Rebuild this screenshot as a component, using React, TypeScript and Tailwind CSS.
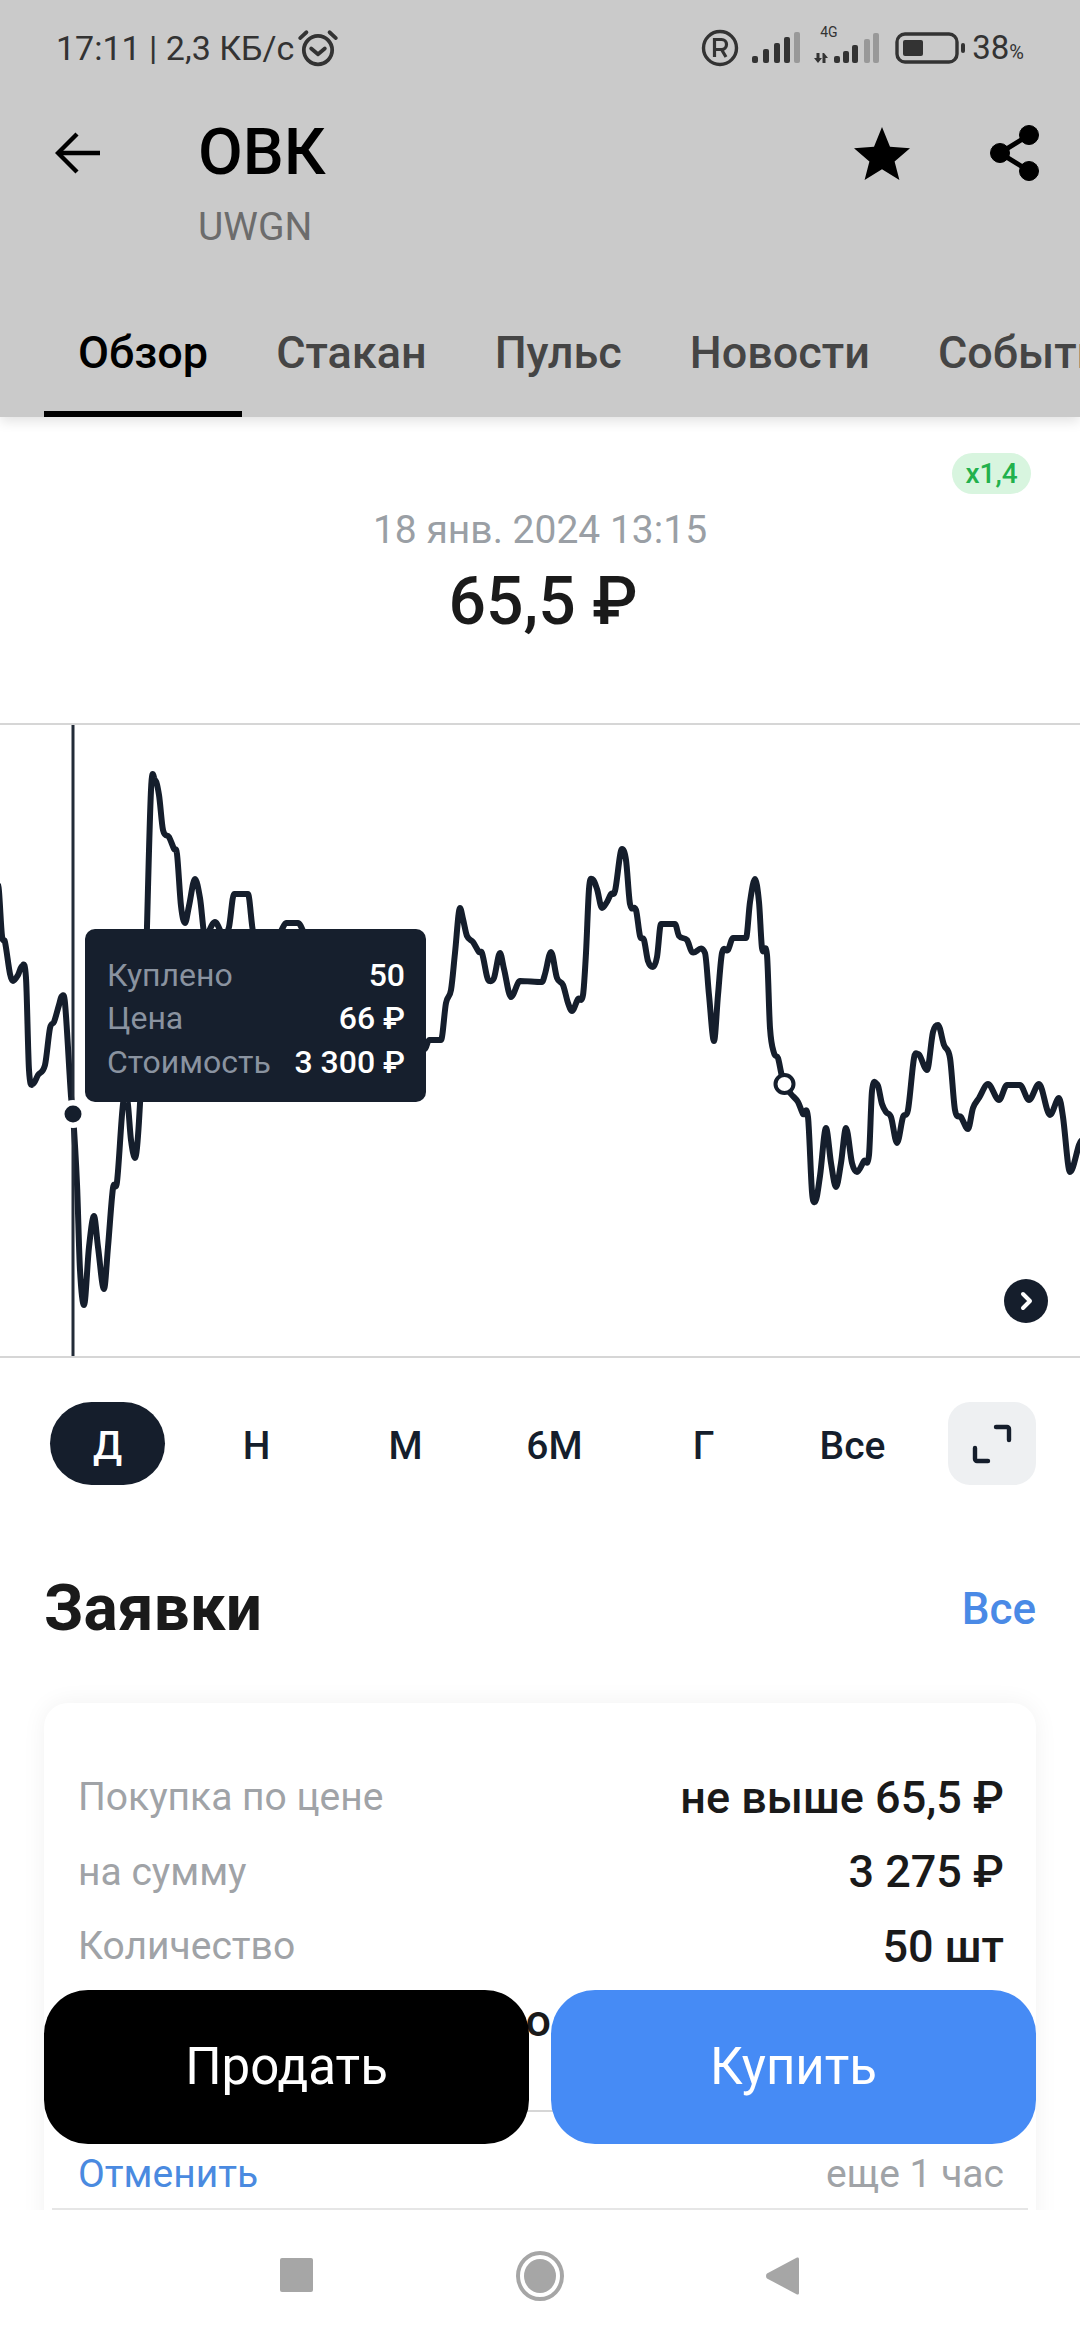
import { useMemo } from "react";

const tabs = ["Обзор", "Стакан", "Пульс", "Новости", "События"];
const ranges = ["Д", "Н", "М", "6М", "Г", "Все"];

// chart points in page pixels
const chartPoints: [number, number][] = [
  [-2, 885], [2, 936], [5, 942], [10, 974], [13, 981], [18, 975], [22, 966], [26, 978], [29, 1070], [33, 1084], [38, 1075], [45, 1065],
  [50, 1028], [54, 1022], [59, 1005], [62, 996], [65, 1003], [71, 1096], [73, 1114], [77, 1184], [80, 1270], [84, 1305], [89, 1247], [94, 1216],
  [98, 1247], [104, 1289], [108, 1247], [113, 1188], [117, 1182], [123, 1104], [127, 1100], [131, 1140], [135, 1158], [139, 1121], [145, 995],
  [151, 790], [155, 780], [159, 795], [163, 830], [169, 837], [174, 849], [177, 854], [181, 906], [185, 923], [189, 906], [195, 879], [200, 898],
  [205, 936], [215, 922], [224, 936], [229, 927], [234, 894], [248, 894], [253, 931], [265, 950], [281, 931], [286, 923], [298, 923], [303, 931],
  [330, 1000], [380, 1050], [425, 1049], [429, 1040], [441, 1040], [446, 1003], [451, 990], [455, 953], [460, 908], [463, 919], [467, 936],
  [473, 942], [479, 952], [482, 953], [489, 981], [494, 978], [500, 953], [504, 969], [511, 997], [520, 981], [542, 982], [545, 974], [551, 952],
  [557, 978], [563, 985], [568, 1003], [572, 1011], [578, 999], [583, 995], [586, 953], [589, 889], [592, 879], [597, 889], [602, 908], [607, 902],
  [611, 894], [615, 891], [622, 849], [626, 860], [630, 904], [636, 910], [640, 936], [644, 940], [648, 961], [653, 967], [657, 957], [661, 924],
  [675, 924], [679, 936], [687, 940], [692, 952], [705, 953], [709, 995], [714, 1041], [718, 995], [722, 953], [728, 950], [733, 938], [746, 938],
  [750, 902], [755, 879], [759, 902], [762, 948], [767, 955], [770, 1028], [774, 1053], [778, 1058], [781, 1072], [784, 1084], [791, 1094],
  [798, 1102], [803, 1114], [808, 1117], [812, 1192], [815, 1202], [820, 1176], [826, 1128], [831, 1163], [836, 1187], [841, 1163], [846, 1128],
  [852, 1163], [857, 1172], [864, 1161], [869, 1155], [872, 1091], [877, 1084], [882, 1104], [886, 1112], [891, 1117], [897, 1143], [903, 1117],
  [908, 1110], [914, 1058], [918, 1054], [927, 1070], [933, 1032], [938, 1025], [944, 1045], [950, 1058], [955, 1110], [961, 1117], [968, 1129],
  [973, 1108], [979, 1098], [988, 1084], [999, 1100], [1007, 1085], [1020, 1085], [1029, 1100], [1039, 1084], [1050, 1115], [1059, 1098],
  [1063, 1117], [1070, 1172], [1082, 1140],
];

// flat tangent at every turning point, so peaks stay round and don't overshoot
function smoothPath(pts: [number, number][]) {
  const slope = (i: number) => {
    const a = pts[Math.max(i - 1, 0)];
    const b = pts[i];
    const c = pts[Math.min(i + 1, pts.length - 1)];
    if ((b[1] - a[1]) * (c[1] - b[1]) <= 0) return 0;
    return (c[1] - a[1]) / (c[0] - a[0]);
  };
  let d = `M${pts[0][0]} ${pts[0][1]}`;
  for (let i = 0; i < pts.length - 1; i++) {
    const p1 = pts[i];
    const p2 = pts[i + 1];
    const h = (p2[0] - p1[0]) / 3;
    d += ` C${p1[0] + h} ${p1[1] + slope(i) * h} ${p2[0] - h} ${p2[1] - slope(i + 1) * h} ${p2[0]} ${p2[1]}`;
  }
  return d;
}

function StatusBar() {
  return (
    <div className="flex h-[95px] items-center pl-[56px] pr-[56px] text-[#333]">
      <span className="text-[34px] leading-none">17:11 | 2,3 КБ/с</span>
      <svg className="ml-[3px] h-[38px] w-[42px]" viewBox="0 0 40 36" fill="none" stroke="#333" strokeWidth="3.6" strokeLinecap="round" strokeLinejoin="round">
        <circle cx="20" cy="20" r="13.5" />
        <path d="M13.5 18.5 20 24l6.500-5.500" />
        <path d="M3 8.500 9 3M37 8.500 31 3" />
      </svg>
      <div className="ml-auto flex items-center">
        <svg className="h-[38px] w-[38px]" viewBox="0 0 38 38" fill="none">
          <circle cx="19" cy="19" r="16.5" stroke="#333" strokeWidth="3.4" />
          <path d="M13.5 28V10.5h7a5 5 0 0 1 0 10h-7m7 0 4.5 7.5" stroke="#333" strokeWidth="3.2" />
        </svg>
        <svg className="ml-[13px] h-[32px] w-[49px]" viewBox="0 0 49 32" fill="#333">
          <rect x="0" y="24" width="6" height="7" rx="2" />
          <rect x="11" y="17" width="6" height="14" rx="2" />
          <rect x="22" y="11" width="6" height="20" rx="2" />
          <rect x="32" y="5" width="6" height="26" rx="2" />
          <rect x="42" y="0" width="6" height="31" rx="2" fill="#999" />
        </svg>
        <div className="relative ml-[13px] h-[32px] w-[66px]">
          <span className="absolute left-[6px] top-[-9px] text-[14px] leading-[18px]">4G</span>
          <svg className="absolute left-0 top-0 h-[32px] w-[66px]" viewBox="0 0 66 32" fill="#333">
            <path d="M2.500 21h3v5H8l-4 5-4-5h2.500ZM10 21l4 5h-2.500v5h-3v-10Z" />
            <rect x="20" y="24" width="6" height="7" rx="2" />
            <rect x="29" y="19" width="6" height="12" rx="2" />
            <rect x="38" y="13" width="6" height="18" rx="2" />
            <rect x="50" y="7" width="6" height="24" rx="2" fill="#999" />
            <rect x="59" y="1" width="6" height="30" rx="2" fill="#999" />
          </svg>
        </div>
        <svg className="ml-[15px] h-[32px] w-[70px]" viewBox="0 0 70 32" fill="none">
          <rect x="2" y="2" width="60" height="28" rx="8" stroke="#333" strokeWidth="3.4" />
          <rect x="8" y="8" width="20" height="16" rx="2" fill="#333" />
          <rect x="66" y="11" width="4" height="10" rx="2" fill="#333" />
        </svg>
        <span className="ml-[7px] text-[33px] leading-none">
          38<span className="text-[20px]">%</span>
        </span>
      </div>
    </div>
  );
}

function Header() {
  return (
    <header className="relative z-10 flex h-[417px] shrink-0 flex-col overflow-hidden bg-[#cacaca] shadow-[0_4px_12px_rgba(0,0,0,0.12)]">
      <StatusBar />
      <div className="mt-[21px] flex pl-[55px] pr-[41px]">
        <svg className="mt-[16px] h-[42px] w-[45px]" viewBox="0 0 45 42" fill="none" stroke="#000" strokeWidth="4.4">
          <path d="M45 21H3" />
          <path d="M22 2 3 21l19 19" />
        </svg>
        <div className="ml-[98px]">
          <div className="text-[65px] font-medium leading-[72px] text-black">ОВК</div>
          <div className="mt-[16px] text-[39px] leading-[46px] text-[#6c6c6c]">UWGN</div>
        </div>
        <svg className="ml-auto mt-[11px] h-[53px] w-[56px]" viewBox="0 0 56 53" fill="#000">
          <path d="M28 0l8 19.8 20 1.5-15.4 13.2L45.4 53 28 42.2 10.6 53l4.8-18.5L0 21.3l20-1.5Z" />
        </svg>
        <svg className="ml-[80px] mt-[9px] h-[56px] w-[49px]" viewBox="0 0 49 56" fill="#000" stroke="#000">
          <circle cx="39" cy="10" r="9.5" />
          <circle cx="39" cy="46" r="9.5" />
          <circle cx="10" cy="28" r="9.5" />
          <path d="M39 10 10 28l29 18" fill="none" strokeWidth="5" />
        </svg>
      </div>
      <nav className="mt-auto flex whitespace-nowrap pl-[44px]">
        {tabs.map((tab, i) => (
          <div
            key={tab}
            className={
              i === 0
                ? "border-b-[6px] border-black px-[34px] pb-[33px] text-[45px] font-medium leading-[51px] text-black"
                : "border-b-[6px] border-transparent px-[34px] pb-[33px] text-[45px] font-medium leading-[51px] text-[#454545]"
            }
          >
            {tab}
          </div>
        ))}
      </nav>
    </header>
  );
}

function Chart() {
  const d = useMemo(() => smoothPath(chartPoints), []);
  return (
    <div className="relative mt-[86px] h-[635px] overflow-hidden border-y-2 border-[#d6d6d6]">
      <svg className="block h-full w-full" viewBox="0 725 1080 631" fill="none">
        <path d={d} stroke="#151e2c" strokeWidth="6" strokeLinejoin="round" strokeLinecap="round" />
        <path d="M73 723V1358" stroke="#222b38" strokeWidth="3" />
        <circle cx="73" cy="1114" r="14" fill="#fff" />
        <circle cx="73" cy="1114" r="8.5" fill="#151e2c" />
        <circle cx="784.5" cy="1084" r="9" fill="#fff" stroke="#151e2c" strokeWidth="4" />
      </svg>
      <div className="absolute left-[85px] top-[204px] flex h-[173px] w-[341px] flex-col justify-center rounded-[10px] bg-[#161f2d] pl-[22px] pr-[21px] pt-[7px] text-[32px] leading-[43.5px]">
        <div className="flex justify-between">
          <span className="text-[#8a93a0]">Куплено</span>
          <span className="font-medium text-white">50</span>
        </div>
        <div className="flex justify-between">
          <span className="text-[#8a93a0]">Цена</span>
          <span className="font-medium text-white">66 ₽</span>
        </div>
        <div className="flex justify-between">
          <span className="text-[#8a93a0]">Стоимость</span>
          <span className="font-medium text-white">3 300 ₽</span>
        </div>
      </div>
      <div className="absolute bottom-[33px] left-[1004px] flex h-[44px] w-[44px] items-center justify-center rounded-full bg-[#151e2c]">
        <svg className="h-[20px] w-[20px]" viewBox="0 0 20 20" fill="none" stroke="#fff" strokeWidth="4" strokeLinecap="round" strokeLinejoin="round">
          <path d="M7 3l7 7-7 7" />
        </svg>
      </div>
    </div>
  );
}

function RangePicker() {
  return (
    <div className="mt-[44px] flex items-center pl-[50px] pr-[44px]">
      <div className="flex gap-[34px]">
        {ranges.map((range, i) => (
          <div
            key={range}
            className={
              i === 0
                ? "flex h-[83px] w-[115px] items-center justify-center rounded-full bg-[#151e2c] pt-[6px] text-[39px] font-medium text-white"
                : "flex h-[83px] w-[115px] items-center justify-center pt-[6px] text-[39px] font-medium text-[#151e2c]"
            }
          >
            {range}
          </div>
        ))}
      </div>
      <div className="ml-auto flex h-[83px] w-[88px] items-center justify-center rounded-[22px] bg-[#eef0f2]">
        <svg className="h-[40px] w-[40px]" viewBox="0 0 40 40" fill="none" stroke="#151e2c" strokeWidth="4.4" strokeLinecap="round" strokeLinejoin="round">
          <path d="M24 3h11a2 2 0 0 1 2 2v11" />
          <path d="M3 24v11a2 2 0 0 0 2 2h11" />
        </svg>
      </div>
    </div>
  );
}

function OrderRow({ label, value }: { label: string; value: string }) {
  return (
    <div className="flex h-[74.5px] items-center justify-between">
      <span className="text-[39px] text-[#a0a3a7]">{label}</span>
      <span className="text-[45px] font-medium text-[#1a1a1a]">{value}</span>
    </div>
  );
}

function Orders() {
  return (
    <section className="px-[44px]">
      <div className="mt-[88px] flex items-center justify-between">
        <h2 className="text-[64px] font-bold leading-[72px] text-[#1a1a1a]">Заявки</h2>
        <span className="text-[44px] font-medium text-[#4a8ae6]">Все</span>
      </div>
      <div className="mt-[58px] h-[600px] rounded-[24px] bg-white pt-[57px] shadow-[0_0_24px_rgba(0,0,0,0.06)]">
        <div className="pl-[34px] pr-[32px]">
          <OrderRow label="Покупка по цене" value="не выше 65,5 ₽" />
          <OrderRow label="на сумму" value="3 275 ₽" />
          <OrderRow label="Количество" value="50 шт" />
          <div className="flex h-[74px] items-center justify-end pr-[453px] text-[45px] font-medium text-[#1a1a1a]">о</div>
        </div>
        <div className="mx-[8px] mt-[52px] flex h-[100px] items-start justify-between border-y-2 border-t-[#d6d6d6] border-b-[#e6e6e6] pl-[26px] pr-[24px] pt-[40px] text-[39px] leading-[44px]">
          <span className="text-[#4a8ae0]">Отменить</span>
          <span className="text-[#a0a3a7]">еще 1 час</span>
        </div>
      </div>
    </section>
  );
}

function BottomNav() {
  return (
    <div className="relative z-10 flex h-[130px] shrink-0 items-start bg-white pl-[280px] pt-[41px]">
      <svg className="mt-[7px] h-[34px] w-[33px]" viewBox="0 0 33 34" fill="#a6a6a6">
        <rect width="33" height="34" rx="2" />
      </svg>
      <svg className="ml-[203px] h-[50px] w-[48px]" viewBox="0 0 48 50" fill="none">
        <ellipse cx="24" cy="25" rx="22" ry="23" stroke="#a6a6a6" strokeWidth="4" />
        <ellipse cx="24" cy="25" rx="16" ry="17" fill="#a6a6a6" />
      </svg>
      <svg className="ml-[202px] mt-[6px] h-[38px] w-[33px]" viewBox="0 0 33 38" fill="#a6a6a6">
        <path d="M31 0.6c1.2-.5 2 .3 2 1.4v34c0 1.1-.8 1.9-2 1.4L1 21.5c-1.3-1.2-1.3-3.800 0-5Z" />
      </svg>
    </div>
  );
}

export default function App() {
  return (
    <div className="relative flex h-[2340px] w-[1080px] flex-col overflow-hidden bg-white font-['Roboto',sans-serif]">
      <Header />
      <main className="relative flex-1 overflow-hidden">
        <div className="flex justify-end pr-[49px] pt-[36px]">
          <span className="flex h-[41px] w-[79px] items-center justify-center rounded-full bg-[#d8f5df] text-[28px] font-medium text-[#22b14c]">x1,4</span>
        </div>
        <div className="mt-[14px] text-center text-[39px] leading-[44px] text-[#9a9fa5]">18 янв. 2024 13:15</div>
        <div className="mt-[15px] pl-[6px] text-center text-[66px] font-medium leading-[70px] text-[#1a1a1a]">65,5 ₽</div>
        <Chart />
        <RangePicker />
        <Orders />
      </main>
      <div className="absolute inset-x-[44px] bottom-[196px] z-20 flex gap-[22px]">
        <button className="h-[154px] flex-1 rounded-[44px] bg-black text-[51px] text-white">Продать</button>
        <button className="h-[154px] flex-1 rounded-[44px] bg-[#468bf5] text-[51px] text-white">Купить</button>
      </div>
      <BottomNav />
    </div>
  );
}
